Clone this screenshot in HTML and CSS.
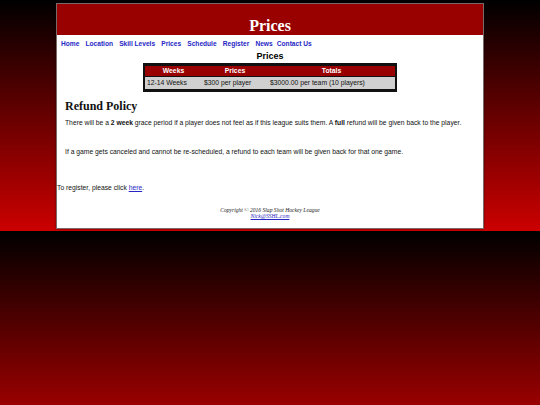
FILE: index.html
```html
<!DOCTYPE html>
<html>
<head>
<meta charset="utf-8">
<title>Prices</title>
<link rel="stylesheet" href="styles.css">
</head>
<body>
<div class="page">
  <div class="banner"><h1>Prices</h1></div>
  <nav class="nav">
    <a href="#">Home</a>
    <a href="#">Location</a>
    <a href="#">Skill Levels</a>
    <a href="#">Prices</a>
    <a href="#">Schedule</a>
    <a href="#">Register</a>
    <a href="#">News</a>
    <a href="#" class="last">Contact Us</a>
  </nav>
  <h2 class="title">Prices</h2>
  <table class="prices">
    <tr><th class="c1">Weeks</th><th class="c2">Prices</th><th class="c3">Totals</th></tr>
    <tr><td>12-14 Weeks</td><td>$300 per player</td><td>$3000.00 per team (10 players)</td></tr>
  </table>
  <div class="policy">
    <h3>Refund Policy</h3>
    <p>There will be a <b>2 week</b> grace period if a player does not feel as if this league suits them. A <b>full</b> refund will be given back to the player.</p>
    <p class="second">If a game gets canceled and cannot be re-scheduled, a refund to each team will be given back for that one game.</p>
  </div>
  <p class="register">To register, please click <a href="#">here</a>.</p>
  <footer class="footer">
    <div>Copyright &copy; 2016 Slap Shot Hockey League</div>
    <a href="#">Nick@SSHL.com</a>
  </footer>
</div>
</body>
</html>
```
FILE: styles.css
```css
html { margin: 0; padding: 0; }
body {
  margin: 0;
  padding: 3px 0 2px;
  background: linear-gradient(#000000, #cc0000);
  font-family: "Liberation Sans", Arial, sans-serif;
}
.page {
  width: 426px;
  margin: 0 auto;
  background: #ffffff;
  border: 1px solid #7a6a6a;
  box-shadow: 0 0 2px rgba(0,0,0,0.5);
}
.banner {
  background: #990000;
  height: 31px;
  display: flex;
  align-items: flex-end;
  justify-content: center;
}
.banner h1 {
  margin: 0 0 -1px;
  color: #ffffff;
  font-family: "Liberation Serif", "DejaVu Serif", serif;
  font-size: 16px;
  font-weight: bold;
  line-height: 20px;
}
.nav {
  padding: 3px 4px 0;
  height: 11px;
  font-size: 6.6px;
  line-height: 11px;
  font-weight: bold;
  display: flex;
  gap: 6.2px;
}
.nav a { color: #2626c4; text-decoration: none; }
.nav a.last { margin-left: -2px; }
.title {
  margin: 1px 0 0;
  text-align: center;
  font-size: 9px;
  line-height: 12px;
  font-weight: bold;
  color: #000;
}
.prices {
  margin: 1px auto 0;
  width: 254px;
  table-layout: fixed;
  border-collapse: separate;
  border-spacing: 0 1px;
  border: 2px solid #111;
  background: #111;
  font-size: 6.8px;
}
.prices th {
  background: #990000;
  color: #ffffff;
  font-weight: bold;
  height: 10px;
  padding: 0 2px;
  line-height: 10px;
}
.prices td {
  background: #d0d0d0;
  color: #111;
  height: 12px;
  padding: 0 2px;
  line-height: 12px;
}
.prices .c1 { width: 53px; }
.prices .c2 { width: 62px; }
.policy { padding: 0 8px; }
.policy h3 {
  margin: 7px 0 0;
  font-family: "Liberation Serif", "DejaVu Serif", serif;
  font-size: 12px;
  line-height: 14px;
  font-weight: bold;
  color: #111;
}
.policy p {
  margin: 5px 0 0;
  font-size: 6.75px;
  line-height: 9px;
  color: #111;
}
.policy p.second { margin-top: 20px; }
.register {
  margin: 27px 0 0;
  font-size: 6.75px;
  line-height: 9px;
  color: #111;
}
.register a { color: #2626c4; }
.footer {
  margin: 15px 0 0;
  padding-bottom: 9px;
  text-align: center;
  font-family: "Liberation Serif", "DejaVu Serif", serif;
  font-style: italic;
  font-size: 5.6px;
  line-height: 6px;
  color: #222;
}
.footer a { color: #2626c4; }
```
